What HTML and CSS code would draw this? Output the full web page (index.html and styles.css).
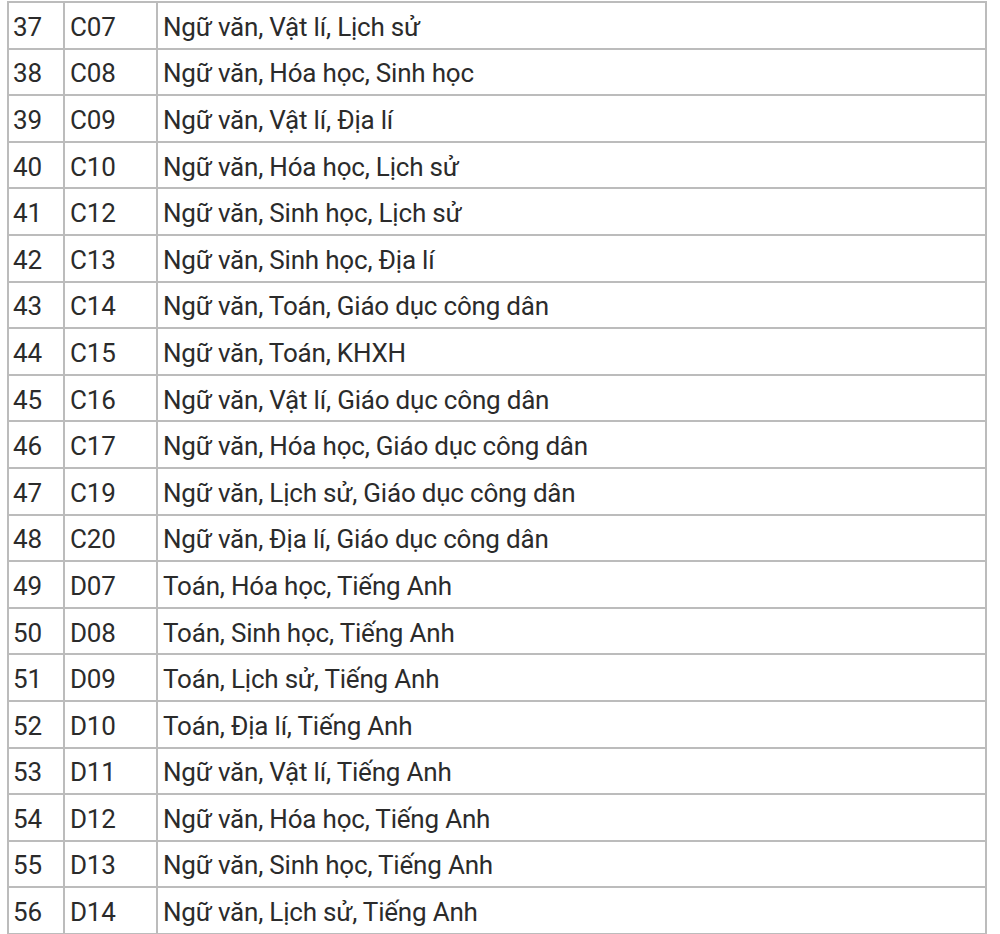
FILE: index.html
```html
<!DOCTYPE html>
<html lang="vi">
<head>
<meta charset="utf-8">
<link rel="stylesheet" href="styles.css">
</head>
<body>
<div class="wrap">
<table class="tbl">
<colgroup><col class="c1"><col class="c2"><col class="c3"></colgroup>
<tbody>
<tr><td>37</td><td>C07</td><td>Ngữ văn, Vật lí, Lịch sử</td></tr>
<tr><td>38</td><td>C08</td><td>Ngữ văn, Hóa học, Sinh học</td></tr>
<tr><td>39</td><td>C09</td><td>Ngữ văn, Vật lí, Địa lí</td></tr>
<tr><td>40</td><td>C10</td><td>Ngữ văn, Hóa học, Lịch sử</td></tr>
<tr><td>41</td><td>C12</td><td>Ngữ văn, Sinh học, Lịch sử</td></tr>
<tr><td>42</td><td>C13</td><td>Ngữ văn, Sinh học, Địa lí</td></tr>
<tr><td>43</td><td>C14</td><td>Ngữ văn, Toán, Giáo dục công dân</td></tr>
<tr><td>44</td><td>C15</td><td>Ngữ văn, Toán, KHXH</td></tr>
<tr><td>45</td><td>C16</td><td>Ngữ văn, Vật lí, Giáo dục công dân</td></tr>
<tr><td>46</td><td>C17</td><td>Ngữ văn, Hóa học, Giáo dục công dân</td></tr>
<tr><td>47</td><td>C19</td><td>Ngữ văn, Lịch sử, Giáo dục công dân</td></tr>
<tr><td>48</td><td>C20</td><td>Ngữ văn, Địa lí, Giáo dục công dân</td></tr>
<tr><td>49</td><td>D07</td><td>Toán, Hóa học, Tiếng Anh</td></tr>
<tr><td>50</td><td>D08</td><td>Toán, Sinh học, Tiếng Anh</td></tr>
<tr><td>51</td><td>D09</td><td>Toán, Lịch sử, Tiếng Anh</td></tr>
<tr><td>52</td><td>D10</td><td>Toán, Địa lí, Tiếng Anh</td></tr>
<tr><td>53</td><td>D11</td><td>Ngữ văn, Vật lí, Tiếng Anh</td></tr>
<tr><td>54</td><td>D12</td><td>Ngữ văn, Hóa học, Tiếng Anh</td></tr>
<tr><td>55</td><td>D13</td><td>Ngữ văn, Sinh học, Tiếng Anh</td></tr>
<tr><td>56</td><td>D14</td><td>Ngữ văn, Lịch sử, Tiếng Anh</td></tr>
</tbody>
</table>
</div>
</body>
</html>
```
FILE: styles.css
```css
html, body {
  margin: 0;
  padding: 0;
  background: #fff;
  overflow: hidden;
}
.wrap {
  padding: 1px 0 0 7px;
}
.tbl {
  border-collapse: collapse;
  table-layout: fixed;
  width: 978px;
  font-family: Roboto, "Liberation Sans", sans-serif;
  font-size: 26px;
  letter-spacing: -0.2px;
  color: #2b2b2b;
}
.c1 { width: 56px; }
.c2 { width: 93px; }
.c3 { width: 829px; }
.tbl td {
  border: 2px solid #bcbcbc;
  height: 46.6px;
  padding: 3px 0 0 4px;
  vertical-align: middle;
  box-sizing: border-box;
  white-space: nowrap;
}
.tbl td:nth-child(2) { padding-left: 5px; }
.tbl td:nth-child(3) { padding-left: 5px; }
```
